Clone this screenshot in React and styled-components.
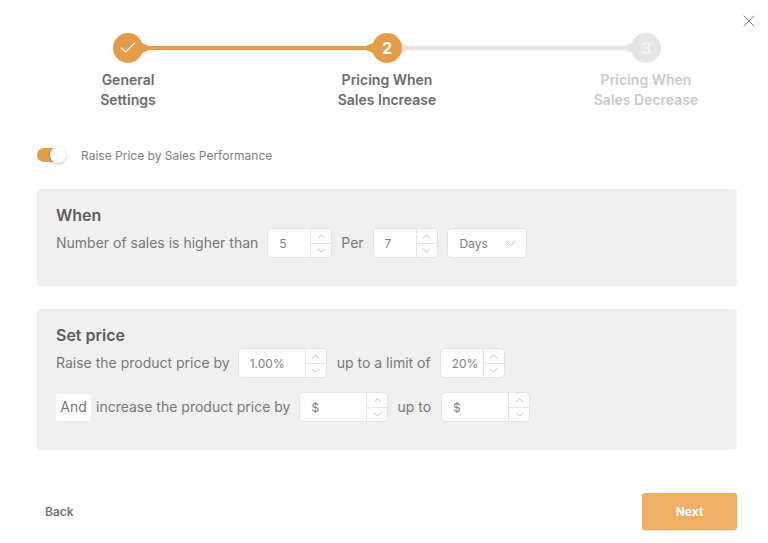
import React from 'react'
import styled, { createGlobalStyle } from 'styled-components'
import { Check, ChevronDown, ChevronUp, X } from 'lucide-react'

const GlobalStyle = createGlobalStyle`
  html, body {
    margin: 0;
    padding: 0;
    background: #fff;
    font-family: Inter, "Noto Sans", sans-serif;
  }
`

const Modal = styled.div`
  position: relative;
  width: 768px;
  height: 543px;
  overflow: hidden;
  padding: 33px 31px 0 37px;
  box-sizing: border-box;
`

const CloseButton = styled.button`
  position: absolute;
  top: 11px;
  right: 9px;
  padding: 0;
  border: 0;
  background: none;
  color: #808080;
  display: flex;
`

const StepTrack = styled.div`
  display: flex;
  align-items: center;
  width: 548px;
  margin-left: 76px;
`

const StepCircle = styled.div`
  position: relative;
  z-index: 1;
  width: 30px;
  height: 30px;
  flex: none;
  border-radius: 50%;
  display: flex;
  align-items: center;
  justify-content: center;
  background: ${(p) => (p.$active ? '#e59c48' : '#e5e5e5')};
  color: ${(p) => (p.$active ? '#fff' : '#f4f4f4')};
  font-size: 16px;
  font-weight: 700;
`

const StepLine = styled.div`
  position: relative;
  flex: 1;
  height: 4px;
  margin: 0 -1px;
  background: ${(p) => (p.$active ? '#e59c48' : '#e5e5e5')};

  &::before,
  &::after {
    content: '';
    position: absolute;
    top: -3px;
    width: 7px;
    height: 10px;
    background: inherit;
  }
  &::before {
    left: 0;
    clip-path: polygon(0 0, 100% 30%, 100% 70%, 0 100%);
  }
  &::after {
    right: 0;
    clip-path: polygon(100% 0, 0 30%, 0 70%, 100% 100%);
  }
`

const StepLabels = styled.div`
  display: grid;
  grid-template-columns: repeat(3, 140px);
  column-gap: 119px;
  margin: 7px 0 0 21px;
`

const StepLabel = styled.div`
  text-align: center;
  font-size: 14px;
  line-height: 20px;
  font-weight: 600;
  color: ${(p) => (p.$muted ? '#c9c9c9' : '#6b6b6b')};
`

const ToggleRow = styled.div`
  display: flex;
  align-items: center;
  gap: 15px;
  margin-top: 35px;
  height: 20px;
`

const ToggleTrack = styled.div`
  position: relative;
  width: 22px;
  height: 14px;
  border-radius: 7px 0 0 7px;
  background: #e59c48;
  margin-right: 7px;
`

const ToggleKnob = styled.div`
  position: absolute;
  top: -1px;
  left: 13px;
  width: 16px;
  height: 16px;
  border-radius: 50%;
  background: #fff;
  box-shadow: 0 1px 3px rgba(0, 0, 0, 0.25);
`

const ToggleLabel = styled.span`
  font-size: 12px;
  color: #808080;
`

const Panel = styled.section`
  box-sizing: border-box;
  width: 700px;
  height: ${(p) => p.$height}px;
  margin-top: ${(p) => p.$top}px;
  padding: 16px 19px 0;
  background: #f0f0f0;
  border-radius: 3px;
`

const PanelTitle = styled.h3`
  margin: 0;
  font-size: 16px;
  line-height: 20px;
  font-weight: 600;
  color: #5c5c5c;
`

const Row = styled.div`
  display: flex;
  align-items: center;
  height: 30px;
  margin-top: ${(p) => p.$top || 3}px;
`

const RowText = styled.span`
  font-size: 14px;
  color: #777;
  white-space: nowrap;
  padding-bottom: 2px;
  margin-right: ${(p) => p.$gap}px;
`

const AndBadge = styled.span`
  box-sizing: border-box;
  width: 35px;
  height: 27px;
  display: flex;
  align-items: center;
  justify-content: center;
  margin-right: 5px;
  padding-bottom: 2px;
  background: #fff;
  border-radius: 3px;
  font-size: 14px;
  color: #777;
`

const NumberBox = styled.div`
  box-sizing: border-box;
  display: flex;
  width: ${(p) => p.$width}px;
  height: 30px;
  margin-right: ${(p) => p.$gap}px;
  background: #fff;
  border: 1px solid #e4e4e4;
  border-radius: 4px;
`

const NumberValue = styled.div`
  flex: 1;
  display: flex;
  align-items: center;
  padding-left: 11px;
  font-size: 12px;
  color: #808080;
`

const Spinner = styled.div`
  width: 20px;
  flex: none;
  display: grid;
  grid-template-rows: 1fr 1fr;
  border-left: 1px solid #e4e4e4;
  color: #808080;
`

const SpinnerCell = styled.div`
  display: flex;
  align-items: center;
  justify-content: center;
  & + & {
    border-top: 1px solid #e4e4e4;
  }
`

const SelectBox = styled.div`
  box-sizing: border-box;
  width: 80px;
  height: 30px;
  display: flex;
  align-items: center;
  justify-content: space-between;
  padding: 0 7px 0 12px;
  background: #fff;
  border: 1px solid #e4e4e4;
  border-radius: 4px;
  font-size: 12px;
  color: #808080;
`

const Footer = styled.div`
  display: flex;
  align-items: center;
  justify-content: space-between;
  width: 700px;
  margin-top: 43px;
`

const BackButton = styled.button`
  padding: 0 0 0 8px;
  border: 0;
  background: none;
  font-family: inherit;
  font-size: 12px;
  font-weight: 600;
  color: #777;
`

const NextButton = styled.button`
  width: 95px;
  height: 37px;
  border: 0;
  border-radius: 3px;
  background: #edae65;
  box-shadow: 0 1px 2px rgba(0, 0, 0, 0.12);
  font-family: inherit;
  font-size: 12px;
  font-weight: 700;
  color: #fff;
`

const NumberInput = ({ value, width, gap }) => (
  <NumberBox $width={width} $gap={gap}>
    <NumberValue>{value}</NumberValue>
    <Spinner>
      <SpinnerCell><ChevronUp size={13} strokeWidth={1} /></SpinnerCell>
      <SpinnerCell><ChevronDown size={13} strokeWidth={1} /></SpinnerCell>
    </Spinner>
  </NumberBox>
)

const App = () => {
  return (
    <Modal>
      <GlobalStyle />
      <CloseButton><X size={20} strokeWidth={1.2} /></CloseButton>

      <StepTrack>
        <StepCircle $active><Check size={20} strokeWidth={1.5} /></StepCircle>
        <StepLine $active />
        <StepCircle $active>2</StepCircle>
        <StepLine />
        <StepCircle>3</StepCircle>
      </StepTrack>
      <StepLabels>
        <StepLabel>General<br />Settings</StepLabel>
        <StepLabel>Pricing When<br />Sales Increase</StepLabel>
        <StepLabel $muted>Pricing When<br />Sales Decrease</StepLabel>
      </StepLabels>

      <ToggleRow>
        <ToggleTrack><ToggleKnob /></ToggleTrack>
        <ToggleLabel>Raise Price by Sales Performance</ToggleLabel>
      </ToggleRow>

      <Panel $height={97} $top={24}>
        <PanelTitle>When</PanelTitle>
        <Row>
          <RowText $gap={9}>Number of sales is higher than</RowText>
          <NumberInput value="5" width={65} gap={9} />
          <RowText $gap={9}>Per</RowText>
          <NumberInput value="7" width={65} gap={9} />
          <SelectBox>Days <ChevronDown size={17} strokeWidth={1} color="#999" /></SelectBox>
        </Row>
      </Panel>

      <Panel $height={141} $top={23}>
        <PanelTitle>Set price</PanelTitle>
        <Row>
          <RowText $gap={8}>Raise the product price by</RowText>
          <NumberInput value="1.00%" width={89} gap={10} />
          <RowText $gap={9}>up to a limit of</RowText>
          <NumberInput value="20%" width={65} gap={0} />
        </Row>
        <Row $top={14}>
          <AndBadge>And</AndBadge>
          <RowText $gap={9}>increase the product price by</RowText>
          <NumberInput value="$" width={89} gap={9} />
          <RowText $gap={10}>up to</RowText>
          <NumberInput value="$" width={89} gap={0} />
        </Row>
      </Panel>

      <Footer>
        <BackButton>Back</BackButton>
        <NextButton>Next</NextButton>
      </Footer>
    </Modal>
  )
}

export default App
